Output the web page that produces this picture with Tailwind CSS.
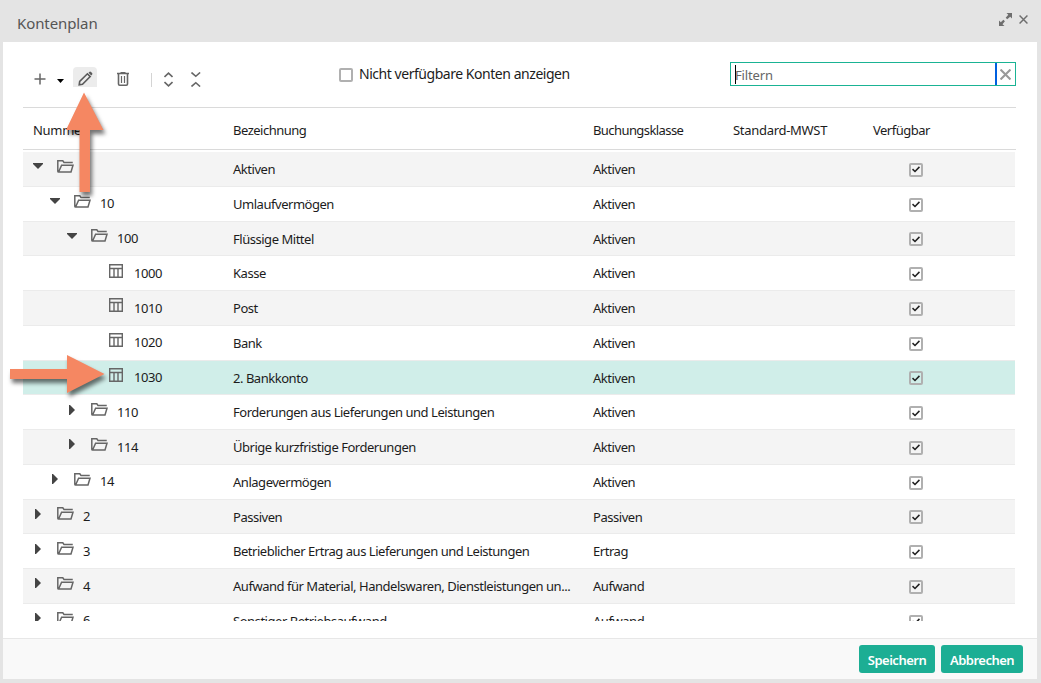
<!DOCTYPE html>
<html lang="de">
<head>
  <meta charset="utf-8">
  <title>Kontenplan</title>
  <script src="https://cdn.jsdelivr.net/npm/@tailwindcss/browser@4"></script>
</head>
<body class="bg-[#e4e4e4] h-[683px] w-[1041px] overflow-hidden font-['Segoe_UI','Noto_Sans',sans-serif] text-[13px] text-[#1c1c1c]">
  <div class="relative flex flex-col h-[679px] pl-[3px] pr-1">

    <!-- Title bar -->
    <div class="h-[42px] shrink-0 flex items-center justify-between pl-3.5 pr-[9px]">
      <h1 class="text-[15px] text-[#555] pt-1 tracking-[-0.1px]">Kontenplan</h1>
      <div class="flex items-center gap-[7px] pb-[3px]">
        <svg class="w-[13px] h-[13px] -ml-px" viewBox="0 0 13 13" fill="#6e6e6e">
          <path d="M7.500 0H13V5.500L11.200 3.700L8.200 6.300L6.700 4.800L9.300 1.800ZM0 13V7.500L1.800 9.300L4.400 6.800L5.900 8.300L3.500 11.200L5.500 13Z" />
        </svg>
        <svg class="w-[9px] h-[9px]" viewBox="0 0 8 8" stroke="#6e6e6e" stroke-width="1.300">
          <path d="M.5 .5L7.500 7.500M7.500 .5L.5 7.500" />
        </svg>
      </div>
    </div>

    <div class="bg-white flex-1 min-h-0 flex flex-col">
      <!-- Toolbar -->
      <div class="ml-5 mr-[21px] h-[66px] shrink-0 border-b border-[#dadada] flex items-start justify-between">
        <div class="flex items-center h-6 mt-[25px] pl-[11px] w-[316px]">
          <svg class="w-[12px] h-[12px]" viewBox="0 0 12 12" stroke="#666" stroke-width="1.500"><path d="M6 .5V11.500M.5 6H11.500" /></svg>
          <svg class="w-[7px] h-[4px] ml-[11px] mt-1" viewBox="0 0 7 4"><path d="M0 0H7L3.500 4Z" fill="#000" /></svg>
          <div class="w-6 h-5 ml-[9px] -mt-1 rounded-t bg-[#ececec] flex items-center justify-center">
            <svg class="w-[15px] h-[15px] mt-[3px]" viewBox="0 0 15 15" fill="none" stroke="#5a5a5a" stroke-width="1.600">
              <path d="M1.200 13.800L1.700 10.500L9.400 2.800L12.200 5.600L4.500 13.300Z" />
              <path d="M10.500 1.700L11.600 .7Q12.300 .2 13 .9L14.100 2Q14.700 2.700 14.200 3.400L13.200 4.500Z" fill="#5a5a5a" stroke="none" />
            </svg>
          </div>
          <svg class="w-3 h-[14px] ml-5" viewBox="0 0 12 14" fill="none" stroke="#666" stroke-width="1.600">
            <path d="M0 1.500H12M3.500 .6H8.500M1.500 2V12Q1.500 13.200 2.700 13.200H9.300Q10.500 13.200 10.500 12V2" />
            <path d="M4.500 4V11M7.500 4V11" stroke-width="1.200" />
          </svg>
          <div class="w-px h-[14px] ml-[22px] mt-0.5 bg-[#d4d4d4]"></div>
          <svg class="w-[9px] h-[15px] ml-[11.5px]" viewBox="0 0 9 15" fill="none" stroke="#666" stroke-width="1.600">
            <path d="M.5 5L4.500 1.200L8.500 5M.5 10L4.500 13.800L8.500 10" />
          </svg>
          <svg class="w-[10px] h-[15px] ml-[18.5px]" viewBox="0 0 10 15" fill="none" stroke="#666" stroke-width="1.600">
            <path d="M.5 .5L4.800 4.300L9.100 .5M.5 14.500L4.800 10.700L9.100 14.500" />
          </svg>
        </div>
        <label class="flex items-center gap-1.5 h-5 mt-[22px] flex-1">
          <span class="w-[14px] h-[14px] border-2 border-[#b0b0b0] rounded-[2px] mt-0.5"></span>
          <span class="text-[14px] -mt-px tracking-[-0.46px]">Nicht verfügbare Konten anzeigen</span>
        </label>
        <div class="w-[286px] h-6 mt-5 border border-[#1ab394] flex items-center">
          <div class="w-px h-[19px] ml-1 bg-black"></div>
          <div class="flex-1 pt-1 -ml-px text-[#666] tracking-[-0.15px]">Filtern</div>
          <div class="w-0.5 h-full bg-[#0060df]"></div>
          <svg class="w-[11px] h-[11px] ml-[3px] mr-1" viewBox="0 0 10 10" stroke="#999" stroke-width="1.900"><path d="M.5 .5L9.500 9.500M9.500 .5L.5 9.500" /></svg>
        </div>
      </div>

      <!-- Table head -->
      <div class="ml-5 mr-[21px] h-[42px] shrink-0 mb-[2px] border-b border-[#dadada] grid grid-cols-[200px_360px_140px_140px_1fr] items-center *:pl-2.5 *:pt-1">
        <div class="tracking-[-0.3px]">Nummer</div>
        <div class="tracking-[-0.5px]">Bezeichnung</div>
        <div class="tracking-[-0.58px]">Buchungsklasse</div>
        <div class="tracking-[-0.3px]">Standard-MWST</div>
        <div class="tracking-[-0.5px]">Verfügbar</div>
      </div>

      <!-- Table rows -->
      <div id="rows" class="ml-5 mr-[22px] h-[469px] overflow-hidden"></div>
    </div>

    <!-- Footer -->
    <div class="h-[41px] shrink-0 bg-[#f9f9f9] border-t border-[#e7e7e7] flex justify-end gap-1.5 pt-1.5 pr-3.5">
      <button class="w-[76px] h-7 pt-[3px] rounded-[3px] bg-[#1cae94] text-white font-semibold tracking-[-0.5px]">Speichern</button>
      <button class="w-[82px] h-7 pt-[3px] rounded-[3px] bg-[#1cae94] text-white font-semibold tracking-[-0.5px]">Abbrechen</button>
    </div>

    <!-- Hint arrows -->
    <svg class="absolute left-0 top-[80px] w-[120px] h-[330px] overflow-visible drop-shadow-[2px_4px_2px_rgba(0,0,0,0.55)]" viewBox="0 80 120 330" fill="#f58762">
      <path d="M84 92.500L103.500 130H90V192H79.500V130H66Z" />
      <path d="M10 369H67V355L104.500 374L67 393V379H10Z" />
    </svg>
  </div>

  <script>
    // level, state (open / closed / leaf), number, name, class
    const accounts = [
      [0, "open", "1", "Aktiven", "Aktiven"],
      [1, "open", "10", "Umlaufvermögen", "Aktiven"],
      [2, "open", "100", "Flüssige Mittel", "Aktiven"],
      [3, "leaf", "1000", "Kasse", "Aktiven"],
      [3, "leaf", "1010", "Post", "Aktiven"],
      [3, "leaf", "1020", "Bank", "Aktiven"],
      [3, "leaf", "1030", "2. Bankkonto", "Aktiven"],
      [2, "closed", "110", "Forderungen aus Lieferungen und Leistungen", "Aktiven"],
      [2, "closed", "114", "Übrige kurzfristige Forderungen", "Aktiven"],
      [1, "closed", "14", "Anlagevermögen", "Aktiven"],
      [0, "closed", "2", "Passiven", "Passiven"],
      [0, "closed", "3", "Betrieblicher Ertrag aus Lieferungen und Leistungen", "Ertrag"],
      [0, "closed", "4", "Aufwand für Material, Handelswaren, Dienstleistungen un...", "Aufwand"],
      [0, "closed", "6", "Sonstiger Betriebsaufwand", "Aufwand"],
    ];

    const toggles = {
      open: '<svg class="w-[10px] h-[6px]" viewBox="0 0 10 6"><path d="M0 0H10V1L5 6L0 1Z" fill="#444" /></svg>',
      closed: '<svg class="w-[6px] h-[10px]" viewBox="0 0 6 10"><path d="M0 0H1L6 5L1 10H0Z" fill="#444" /></svg>',
      leaf: "",
    };

    const folder = `<svg class="w-[17px] h-[13px]" viewBox="0 0 17 13" fill="none" stroke="#666" stroke-width="1.500">
      <path d="M15 3.300V2.500H7L5.800 .8H.8V11.200Q.8 12 1.600 12H14L16 5.200H4.600L1.700 11.800" /></svg>`;
    const table = `<svg class="w-[14px] h-[14px] ml-px" viewBox="0 0 14 14" fill="none" stroke="#666" stroke-width="1.400">
      <path d="M.7 .7H13.300V13.300H.7ZM.7 4.500H13.300M5 4.500V13.300M9 4.500V13.300" /></svg>`;

    document.getElementById("rows").innerHTML = accounts.map(([level, state, number, name, kind], i) => {
      const bg = number === "1030" ? "bg-[#d0eee9]" : i % 2 ? "bg-white" : "bg-[#f4f4f4]";
      return `
        <div class="${bg} h-[34.75px] border-b border-[#ebebeb] grid grid-cols-[200px_360px_140px_140px_1fr] items-center">
          <div class="flex items-center" style="padding-left: ${9 + level * 17}px">
            <span class="w-3 h-2.5 mb-[5px] flex items-center justify-center">${toggles[state]}</span>
            <span class="w-[26px] ml-[13px] mb-[5px]">${state === "leaf" ? table : folder}</span>
            <span class="tracking-[-0.4px] pt-px">${number}</span>
          </div>
          <div class="pl-2.5 pt-0.5 whitespace-nowrap tracking-[-0.47px]">${name}</div>
          <div class="pl-2.5 pt-0.5 tracking-[-0.45px]">${kind}</div>
          <div></div>
          <div class="pl-[46px]">
            <span class="w-[14px] h-[14px] mt-0.5 border-2 border-[#b0b0b0] rounded-[2px] flex items-center justify-center">
              <svg class="w-2 h-[7px]" viewBox="0 0 8 7" fill="none" stroke="#222" stroke-width="1.600"><path d="M.5 3.200L3 5.500L7.500 .9" /></svg>
            </span>
          </div>
        </div>`;
    }).join("");
  </script>
</body>
</html>
